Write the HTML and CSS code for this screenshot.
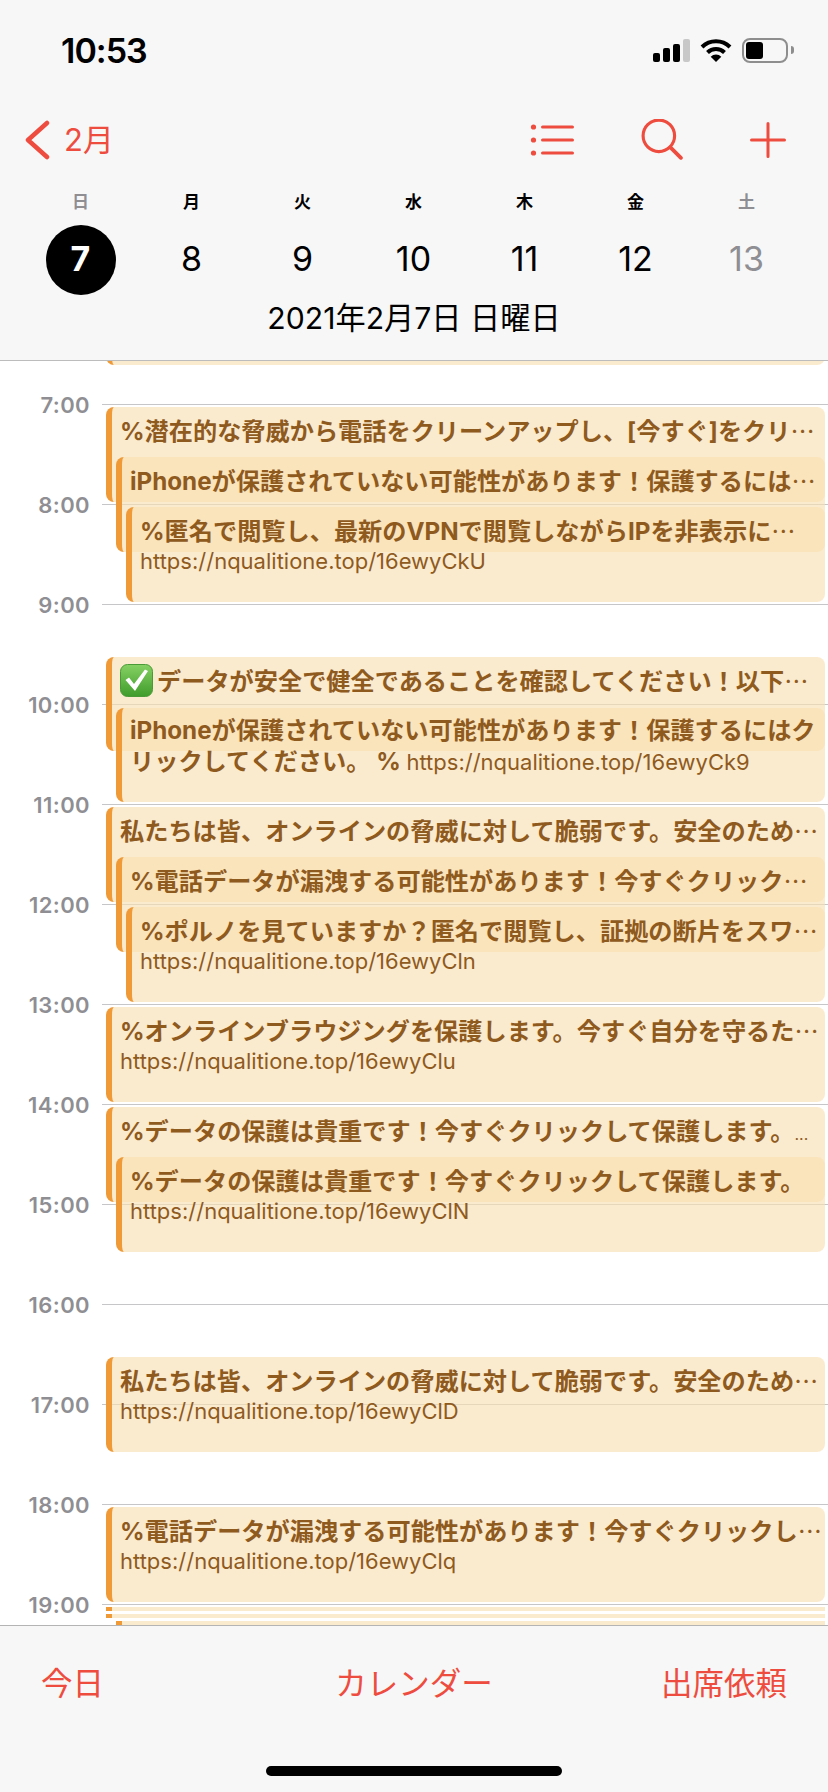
FILE: index.html
```html
<!DOCTYPE html>
<html lang="ja">

<head>
    <meta charset="utf-8" name="viewport" content="width=device-width, initial-scale=1" />
    <title>カレンダー</title>
    <link rel="stylesheet" href="styles.css">
</head>

<body>
    <div class="page">
        <header class="head">
            <div class="status">
                <span class="clock">10:53</span>
                <div class="status-icons">
                    <div class="signal">
                        <i class="bar1"></i><i class="bar2"></i><i class="bar3"></i><i class="bar4"></i>
                    </div>
                    <svg class="wifi" width="32" height="24" viewBox="0 0 32 24">
                        <path d="M2 9A20 20 0 0 1 30 9" fill="none" stroke="#000" stroke-width="4" />
                        <path d="M7.5 14.5A12 12 0 0 1 24.5 14.5" fill="none" stroke="#000" stroke-width="4" />
                        <path d="M16 24L10.7 18.7A7.5 7.5 0 0 1 21.3 18.7Z" fill="#000" />
                    </svg>
                    <div class="battery"><div class="charge"></div></div>
                    <div class="battery-cap"></div>
                </div>
            </div>
            <nav class="nav">
                <div class="back">
                    <svg width="26" height="40" viewBox="0 0 26 40">
                        <path d="M23 3L4 20L23 37" fill="none" stroke="#ee4c3e" stroke-width="4.5" stroke-linecap="round" stroke-linejoin="round" />
                    </svg>
                    <span>2月</span>
                </div>
                <div class="actions">
                    <svg width="44" height="34" viewBox="0 0 44 34">
                        <circle cx="3.5" cy="4" r="2.6" fill="#ee4c3e" />
                        <circle cx="3.5" cy="17" r="2.6" fill="#ee4c3e" />
                        <circle cx="3.5" cy="30" r="2.6" fill="#ee4c3e" />
                        <path d="M12.5 4H42.5M12.5 17H42.5M12.5 30H42.5" stroke="#ee4c3e" stroke-width="3" stroke-linecap="round" />
                    </svg>
                    <svg width="42" height="42" viewBox="0 0 40 40">
                        <circle cx="17" cy="16" r="15" fill="none" stroke="#ee4c3e" stroke-width="3" />
                        <path d="M28 27L38 37" stroke="#ee4c3e" stroke-width="3.6" stroke-linecap="round" />
                    </svg>
                    <svg width="36" height="36" viewBox="0 0 36 36">
                        <path d="M18 1.5V34.5M1.5 18H34.5" stroke="#ee4c3e" stroke-width="3" stroke-linecap="round" />
                    </svg>
                </div>
            </nav>
            <div class="week">
                <span class="off">日</span><span>月</span><span>火</span><span>水</span><span>木</span><span>金</span><span class="off">土</span>
            </div>
            <div class="days">
                <div class="day"><span class="today">7</span></div>
                <div class="day">8</div>
                <div class="day">9</div>
                <div class="day">10</div>
                <div class="day">11</div>
                <div class="day">12</div>
                <div class="day off">13</div>
            </div>
            <div class="date">2021年2月7日 日曜日</div>
        </header>

        <main class="timeline">
            <div class="hours">
                <div class="hour"><span>7:00</span><i></i></div>
                <div class="hour"><span>8:00</span><i></i></div>
                <div class="hour"><span>9:00</span><i></i></div>
                <div class="hour"><span>10:00</span><i></i></div>
                <div class="hour"><span>11:00</span><i></i></div>
                <div class="hour"><span>12:00</span><i></i></div>
                <div class="hour"><span>13:00</span><i></i></div>
                <div class="hour"><span>14:00</span><i></i></div>
                <div class="hour"><span>15:00</span><i></i></div>
                <div class="hour"><span>16:00</span><i></i></div>
                <div class="hour"><span>17:00</span><i></i></div>
                <div class="hour"><span>18:00</span><i></i></div>
                <div class="hour"><span>19:00</span><i></i></div>
            </div>

            <div class="event" style="top:-60px;height:64px;left:106px"></div>

            <div class="event" style="top:46px;height:95px;left:106px">
                <div class="title">%潜在的な脅威から電話をクリーンアップし、[今すぐ]をクリ<span class="more">⋯</span></div>
            </div>
            <div class="event" style="top:96px;height:95px;left:116px">
                <div class="title">iPhoneが保護されていない可能性があります！保護するには<span class="more">⋯</span></div>
            </div>
            <div class="event" style="top:146px;height:95px;left:126px">
                <div class="title">%匿名で閲覧し、最新のVPNで閲覧しながらIPを非表示に<span class="more">⋯</span></div>
                <div class="url">https://nqualitione.top/16ewyCkU</div>
            </div>

            <div class="event" style="top:296px;height:94px;left:106px">
                <div class="title title-top"><svg class="check" width="34" height="33" viewBox="0 0 34 33">
                        <defs>
                            <linearGradient id="checkFill" x1="0" y1="0" x2="0" y2="1">
                                <stop offset="0" stop-color="#86d163" />
                                <stop offset="1" stop-color="#3f9c2c" />
                            </linearGradient>
                        </defs>
                        <rect x="0.5" y="0.5" width="32" height="32" rx="7" fill="url(#checkFill)" stroke="#4a9a38" />
                        <path d="M5.5 16L9 13.5L14 20L25 5.5L28 7L15 27Z" fill="#fff" />
                    </svg>データが安全で健全であることを確認してください！以下<span class="more">⋯</span></div>
            </div>
            <div class="event" style="top:347px;height:94px;left:116px">
                <div class="title title-top">iPhoneが保護されていない可能性があります！保護するにはク<br>リックしてください。 % <span class="url-inline">https://nqualitione.top/16ewyCk9</span></div>
            </div>

            <div class="event" style="top:446px;height:95px;left:106px">
                <div class="title">私たちは皆、オンラインの脅威に対して脆弱です。安全のため<span class="more">⋯</span></div>
            </div>
            <div class="event" style="top:496px;height:95px;left:116px">
                <div class="title">%電話データが漏洩する可能性があります！今すぐクリック<span class="more">⋯</span></div>
            </div>
            <div class="event" style="top:546px;height:95px;left:126px">
                <div class="title">%ポルノを見ていますか？匿名で閲覧し、証拠の断片をスワ<span class="more">⋯</span></div>
                <div class="url">https://nqualitione.top/16ewyCln</div>
            </div>

            <div class="event" style="top:646px;height:95px;left:106px">
                <div class="title">%オンラインブラウジングを保護します。今すぐ自分を守るた<span class="more">⋯</span></div>
                <div class="url">https://nqualitione.top/16ewyClu</div>
            </div>

            <div class="event" style="top:746px;height:95px;left:106px">
                <div class="title">%データの保護は貴重です！今すぐクリックして保護します。<span class="dots">...</span></div>
            </div>
            <div class="event" style="top:796px;height:95px;left:116px">
                <div class="title">%データの保護は貴重です！今すぐクリックして保護します。</div>
                <div class="url">https://nqualitione.top/16ewyClN</div>
            </div>

            <div class="event" style="top:996px;height:95px;left:106px">
                <div class="title">私たちは皆、オンラインの脅威に対して脆弱です。安全のため<span class="more">⋯</span></div>
                <div class="url">https://nqualitione.top/16ewyClD</div>
            </div>

            <div class="event" style="top:1146px;height:95px;left:106px">
                <div class="title">%電話データが漏洩する可能性があります！今すぐクリックし<span class="more">⋯</span></div>
                <div class="url">https://nqualitione.top/16ewyClq</div>
            </div>

            <div class="event strip" style="top:1246px;left:106px"></div>
            <div class="event strip" style="top:1253px;left:106px"></div>
            <div class="event strip" style="top:1260px;left:116px"></div>
        </main>

        <footer class="foot">
            <div class="tools">
                <span>今日</span>
                <span>カレンダー</span>
                <span class="tool-end">出席依頼</span>
            </div>
            <div class="home-bar"></div>
        </footer>
    </div>
</body>

</html>
```
FILE: styles.css
```css
* {
    box-sizing: border-box;
}

body {
    margin: 0;
    overflow: hidden;
    background: #fff;
    font-family: "Inter", "Noto Sans CJK JP", sans-serif;
    color: #000;
}

.page {
    display: flex;
    flex-direction: column;
    width: 828px;
    height: 1792px;
}

/* top part */
.head {
    height: 361px;
    background: #f7f7f7;
    border-bottom: 1px solid #bcbcbc;
}

.status {
    display: flex;
    justify-content: space-between;
    align-items: center;
    height: 100px;
    padding: 0 34px 0 61px;
}

.clock {
    font-size: 34px;
    font-weight: 600;
    letter-spacing: -1px;
}

.status-icons {
    display: flex;
    align-items: center;
    height: 26px;
}

.signal {
    display: flex;
    align-items: flex-end;
    gap: 3px;
    height: 24px;
    margin-right: 10px;
}

.signal i {
    display: block;
    width: 7px;
    border-radius: 2px;
    background: #000;
}

.bar1 {
    height: 9px;
}

.bar2 {
    height: 14px;
}

.bar3 {
    height: 18px;
}

.signal .bar4 {
    height: 23px;
    background: #c8c8c8;
}

.battery {
    width: 46px;
    height: 25px;
    margin-left: 10px;
    padding: 2px;
    border: 2px solid #8e8e8e;
    border-radius: 8px;
}

.charge {
    width: 17px;
    height: 17px;
    border-radius: 3px;
    background: #000;
}

.battery-cap {
    width: 3px;
    height: 8px;
    margin-left: 3px;
    border-radius: 0 3px 3px 0;
    background: #8e8e8e;
}

.nav {
    display: flex;
    justify-content: space-between;
    align-items: center;
    height: 80px;
    padding: 0 42px 0 24px;
    color: #ee4c3e;
}

.back {
    display: flex;
    align-items: center;
    gap: 14px;
    font-size: 31px;
    line-height: 40px;
}

.actions {
    display: flex;
    align-items: center;
    gap: 67px;
}

.week,
.days {
    display: grid;
    grid-template-columns: repeat(7, 111px);
    padding-left: 25px;
    text-align: center;
}

.week {
    height: 40px;
    align-items: center;
    font-size: 17px;
    font-weight: 700;
}

.week .off,
.day.off {
    color: #8e8e93;
}

.days {
    height: 76px;
    padding-top: 5px;
}

.day {
    font-size: 34px;
    line-height: 68px;
}

.today {
    display: block;
    width: 70px;
    height: 70px;
    margin: 0 auto;
    border-radius: 50%;
    background: #000;
    color: #fff;
    font-weight: 700;
}

.date {
    height: 45px;
    font-size: 30.2px;
    line-height: 44px;
    text-align: center;
}

/* day view */
.timeline {
    position: relative;
    flex: 1;
    overflow: hidden;
    background: #fff;
}

.hours {
    margin-top: -7px;
}

.hour {
    display: flex;
    align-items: center;
    height: 100px;
}

.hour span {
    width: 90px;
    margin-top: 2px;
    color: #8e8e93;
    font-size: 22px;
    font-weight: 600;
    letter-spacing: 0.4px;
    text-align: right;
}

.hour i {
    flex: 1;
    height: 1px;
    margin-left: 12px;
    background: #c6c6c8;
}

.event {
    position: absolute;
    right: 3px;
    padding: 9px 0 0 8px;
    overflow: hidden;
    border-left: 6px solid #f09a37;
    border-radius: 8px;
    background: rgba(249, 224, 177, 0.63);
    color: #8f5a1e;
}

.strip {
    height: 4px;
    padding: 0;
    border-radius: 0;
}

.title {
    font-size: 24.2px;
    font-weight: 700;
    line-height: 31px;
    white-space: nowrap;
}

.title-top {
    margin-top: -2px;
}

.more {
    font-weight: 400;
}

.dots {
    font-size: 16px;
    font-weight: 400;
}

.check {
    margin-right: 3px;
    vertical-align: -7px;
}

.url {
    font-size: 22px;
    line-height: 29px;
    white-space: nowrap;
}

.url-inline {
    font-size: 22px;
    font-weight: 400;
}

/* bottom bar */
.foot {
    height: 167px;
    border-top: 1px solid #b4b4b4;
    background: #f7f7f7;
}

.tools {
    display: grid;
    grid-template-columns: 1fr auto 1fr;
    align-items: center;
    height: 109px;
    padding: 0 41px;
    color: #ee4c3e;
    font-size: 31.5px;
    font-weight: 400;
}

.tool-end {
    text-align: right;
}

.home-bar {
    width: 296px;
    height: 10px;
    margin: 31px auto 0;
    border-radius: 5px;
    background: #000;
}
```
